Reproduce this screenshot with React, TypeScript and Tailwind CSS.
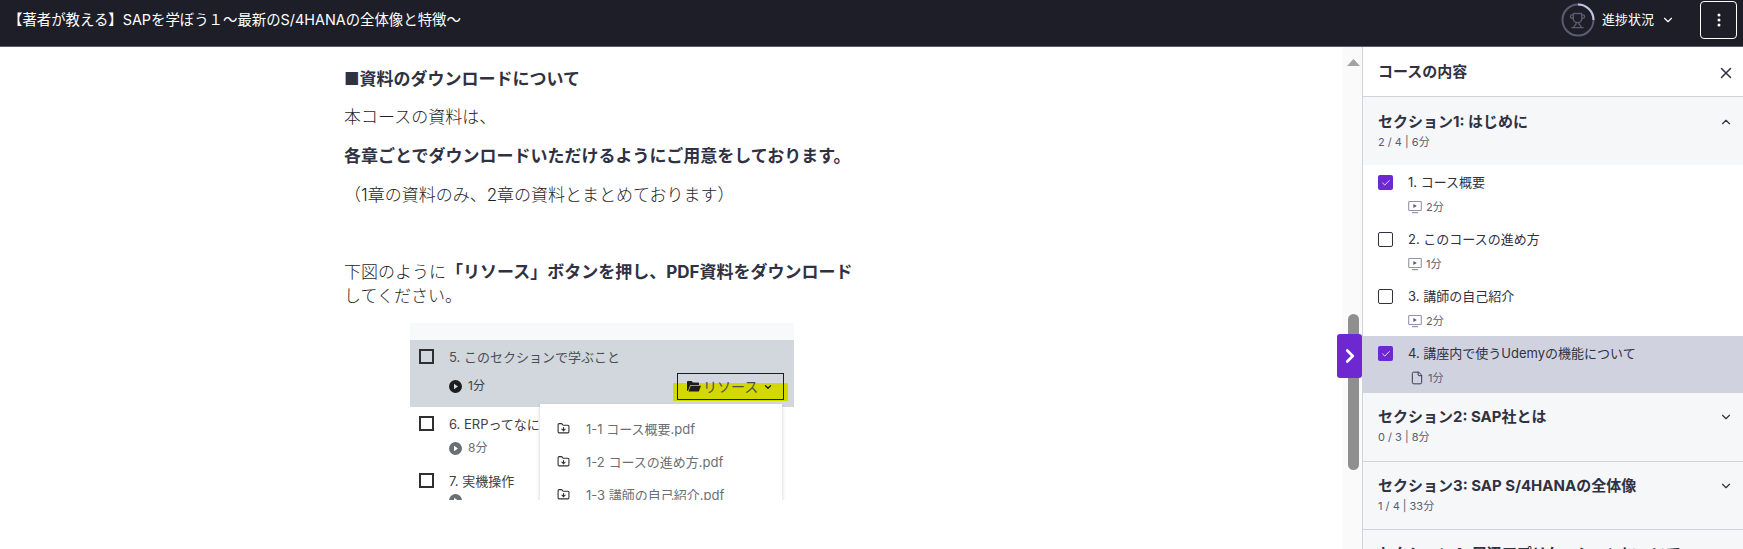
import React from "react";
import { ChevronDown, ChevronUp, ChevronRight, X, Trophy, File, FolderDown, Check } from "lucide-react";

const font = { fontFamily: '"Inter","Noto Sans CJK JP","Liberation Sans",sans-serif' };

function VideoIcon() {
  return (
    <svg width="14" height="14" viewBox="0 0 14 14" className="shrink-0" fill="none">
      <rect x="0.7" y="1.5" width="12.6" height="9" rx="0.8" stroke="#9194ac" strokeWidth="1.1" />
      <path d="M5.4 4v4l3.4-2z" fill="#595c73" />
      <path d="M4 12.6h6" stroke="#9194ac" strokeWidth="1.2" />
    </svg>
  );
}

function Box({ checked }: { checked: boolean }) {
  return checked ? (
    <span className="mt-[1px] flex h-[15px] w-[15px] shrink-0 items-center justify-center rounded-[2px] bg-[#6d28d2]">
      <Check size={10} color="#ffffff" strokeWidth={2} />
    </span>
  ) : (
    <span className="mt-[1px] h-[15px] w-[15px] shrink-0 rounded-[2px] border border-[#303141]" />
  );
}

function Item({ checked, title, time, doc, active }: { checked: boolean; title: string; time: string; doc?: boolean; active?: boolean }) {
  return (
    <div className={`flex h-[57px] shrink-0 gap-[15px] pl-[15px] pt-[9px] ${active ? "bg-[#d1d2e0]" : "bg-white"}`}>
      <Box checked={checked} />
      <div className="flex flex-col">
        <div className="h-4 text-[13px] leading-4 text-[#303141]">{title}</div>
        <div className="mt-[10px] flex h-[14px] items-center gap-[4px] text-[11px] leading-[14px] text-[#595c73]">
          {doc ? (
            <span className="flex w-[16px] justify-end"><File size={14} color="#303141" strokeWidth={1.6} /></span>
          ) : (
            <VideoIcon />
          )}
          <span>{time}</span>
        </div>
      </div>
    </div>
  );
}

function Section({ title, sub, open, short }: { title: string; sub?: string; open?: boolean; short?: boolean }) {
  return (
    <div className={`flex shrink-0 items-start justify-between bg-[#f6f7f9] pl-[15px] pr-[10px] ${short ? "h-[68px]" : "h-[69px]"} ${open ? "pt-[16px]" : "border-b border-[#d1d2e0] pt-[15px]"}`}>
      <div>
        <div className="h-[18px] text-[15px] font-bold leading-[18px] text-[#303141]">{title}</div>
        {sub && <div className="mt-[3px] h-4 text-[11px] leading-4 text-[#595c73]">{sub}</div>}
      </div>
      <span className="pt-[2px]">
        {open ? <ChevronUp size={14} color="#303141" /> : <ChevronDown size={14} color="#303141" />}
      </span>
    </div>
  );
}

function PlayDot({ dark }: { dark: boolean }) {
  return (
    <svg width="13" height="13" viewBox="0 0 13 13" className="shrink-0">
      <circle cx="6.5" cy="6.5" r="6.5" fill={dark ? "#1c1d1f" : "#6a6f73"} />
      <path d="M5 3.8v5.4l4-2.7z" fill={dark ? "#d1d7dc" : "#ffffff"} />
    </svg>
  );
}

function FolderSolid() {
  return (
    <svg width="14" height="11" viewBox="0 0 14 11" className="shrink-0">
      <path d="M0 1.2C0 .5.5 0 1.2 0h3.4l1.3 1.4h5c.7 0 1.1.4 1.1 1V4H3.2L.9 10H.8C.3 10 0 9.600 0 9z" fill="#1c1d1f" />
      <path d="M3.700 4.800H14l-2.200 5.700H1.500z" fill="#1c1d1f" />
    </svg>
  );
}

function LessonShot() {
  return (
    <div className="relative ml-[66px] h-[177px] w-[384px] overflow-hidden bg-white text-[13px] leading-4 font-normal text-[#3e4143]">
      <div className="h-[17px] bg-[#f8f9fb]" />
      <div className="flex h-[67px] gap-[15px] bg-[#d1d7dc] pl-[9px] pt-[9px]">
        <span className="h-[15px] w-[15px] shrink-0 border-2 border-[#2d2f31]" />
        <div>
          <div className="h-4 leading-4 text-[#4b4e50]">5. このセクションで学ぶこと</div>
          <div className="mt-[13px] flex items-center gap-[6px] text-[12px] leading-4">
            <PlayDot dark />
            <span>1分</span>
          </div>
        </div>
      </div>
      <div className="flex h-[57px] gap-[15px] pl-[9px] pt-[9px]">
        <span className="h-[15px] w-[15px] shrink-0 border-2 border-[#2d2f31]" />
        <div>
          <div className="h-4 leading-4">6. ERPってなに</div>
          <div className="mt-[8px] flex items-center gap-[6px] text-[12px] leading-4 text-[#6a6f73]">
            <PlayDot dark={false} />
            <span>8分</span>
          </div>
        </div>
      </div>
      <div className="flex h-[40px] gap-[15px] pl-[9px] pt-[9px]">
        <span className="h-[15px] w-[15px] shrink-0 border-2 border-[#2d2f31]" />
        <div>
          <div className="h-4 leading-4">7. 実機操作</div>
          <div className="mt-[5px]"><PlayDot dark={false} /></div>
        </div>
      </div>

      <div className="absolute left-[263px] top-[60px] h-[18px] w-[115px] bg-[#d3d800]" />
      <div className="absolute left-[267px] top-[50px] flex h-[27px] w-[107px] items-center gap-[2px] border border-[#1c1d1f] pl-[9px] text-[14px] text-[#4b4e50]">
        <FolderSolid />
        <span className="leading-4">リソース</span>
        <ChevronDown size={10} color="#1c1d1f" strokeWidth={3} className="ml-[3px]" />
      </div>

      <div className="absolute left-[130px] top-[81px] w-[242px] bg-white pl-[17px] pt-[8px] shadow-[0_2px_4px_rgba(0,0,0,0.2)]">
        {["1-1 コース概要.pdf", "1-2 コースの進め方.pdf", "1-3 講師の自己紹介.pdf"].map((t) => (
          <div key={t} className="flex h-[33px] items-center gap-[16px] text-[#6a6f73]">
            <FolderDown size={13} color="#2d2f31" />
            <span>{t}</span>
          </div>
        ))}
      </div>
    </div>
  );
}

export default function App() {
  return (
    <div className="flex h-[549px] w-full flex-col overflow-hidden bg-white" style={font}>
      <header className="flex h-[47px] shrink-0 justify-between border-b border-[#595c73] bg-[#1d1e27] pl-[8px] pr-[6px] text-white">
        <div className="flex h-[40px] items-center text-[14.4px] text-white">【著者が教える】SAPを学ぼう１～最新のS/4HANAの全体像と特徴～</div>
        <div className="flex h-[40px] items-center">
          <div className="relative flex h-[34px] w-[34px] items-center justify-center">
            <svg width="34" height="34" viewBox="0 0 34 34" className="absolute inset-0">
              <circle cx="17" cy="17" r="15.5" fill="none" stroke="#595c73" strokeWidth="2" />
              <path d="M17 1.500A15.500 15.500 0 0 1 32.500 17" fill="none" stroke="#c0c4dc" strokeWidth="2" />
            </svg>
            <Trophy size={17} color="#595c73" />
          </div>
          <span className="ml-[7px] text-[13px]">進捗状況</span>
          <ChevronDown size={14} color="#ffffff" className="ml-[7px]" />
          <button className="ml-[25px] flex h-[38px] w-[37px] items-center justify-center rounded-[4px] border border-white">
            <svg width="4" height="14" viewBox="0 0 4 14"><circle cx="2" cy="2" r="1.500" fill="#fff" /><circle cx="2" cy="7" r="1.500" fill="#fff" /><circle cx="2" cy="12" r="1.500" fill="#fff" /></svg>
          </button>
        </div>
      </header>

      <div className="relative flex min-h-0 flex-1">
        <main className="w-[1343px] shrink-0 pl-[344px] pt-[20px] text-[17px] font-light leading-6 text-[#1d1e27]">
          <p className="font-bold text-[#303141]">■資料のダウンロードについて</p>
          <p className="mt-[14px]">本コースの資料は、</p>
          <p className="mt-[15px] font-bold text-[#303141]">各章ごとでダウンロードいただけるようにご用意をしております。</p>
          <p className="mt-[15px]">（1章の資料のみ、2章の資料とまとめております）</p>
          <p className="mt-[53px]">
            下図のように<b className="font-bold text-[#303141]">「リソース」ボタンを押し、PDF資料をダウンロード</b>
            <br />
            してください。
          </p>
          <div className="mt-[15px]">
            <LessonShot />
          </div>
        </main>

        <div className="flex w-[19px] shrink-0 flex-col items-center bg-[#fafafa] pl-[1px]">
          <svg width="13" height="7" viewBox="0 0 13 7" className="mt-[12px]"><path d="M6.500 0L13 7H0z" fill="#a3a3a3" /></svg>
          <div className="mt-[248px] h-[156px] w-[11px] rounded-full bg-[#8f8f8f]" />
        </div>

        <button className="absolute left-[1337px] top-[287px] flex h-[44px] w-[25px] items-center justify-center rounded-[3px] bg-[#6d28d2]">
          <ChevronRight size={22} color="#ffffff" strokeWidth={3} />
        </button>

        <aside className="flex w-[381px] shrink-0 flex-col overflow-hidden border-l border-[#d1d2e0]">
          <div className="flex h-[50px] shrink-0 items-center justify-between border-b border-[#d1d2e0] bg-white pl-[15px] pr-[8px] pt-[2px]">
            <span className="text-[15px] font-bold text-[#303141]">コースの内容</span>
            <X size={18} color="#303141" />
          </div>
          <Section title="セクション1: はじめに" sub="2 / 4 | 6分" open short />
          <Item checked title="1. コース概要" time="2分" />
          <Item checked={false} title="2. このコースの進め方" time="1分" />
          <Item checked={false} title="3. 講師の自己紹介" time="2分" />
          <Item checked active title="4. 講座内で使うUdemyの機能について" time="1分" doc />
          <Section title="セクション2: SAP社とは" sub="0 / 3 | 8分" />
          <Section title="セクション3: SAP S/4HANAの全体像" sub="1 / 4 | 33分" short />
          <Section title="セクション4: 周辺アプリケーションについて" />
        </aside>
      </div>
    </div>
  );
}
